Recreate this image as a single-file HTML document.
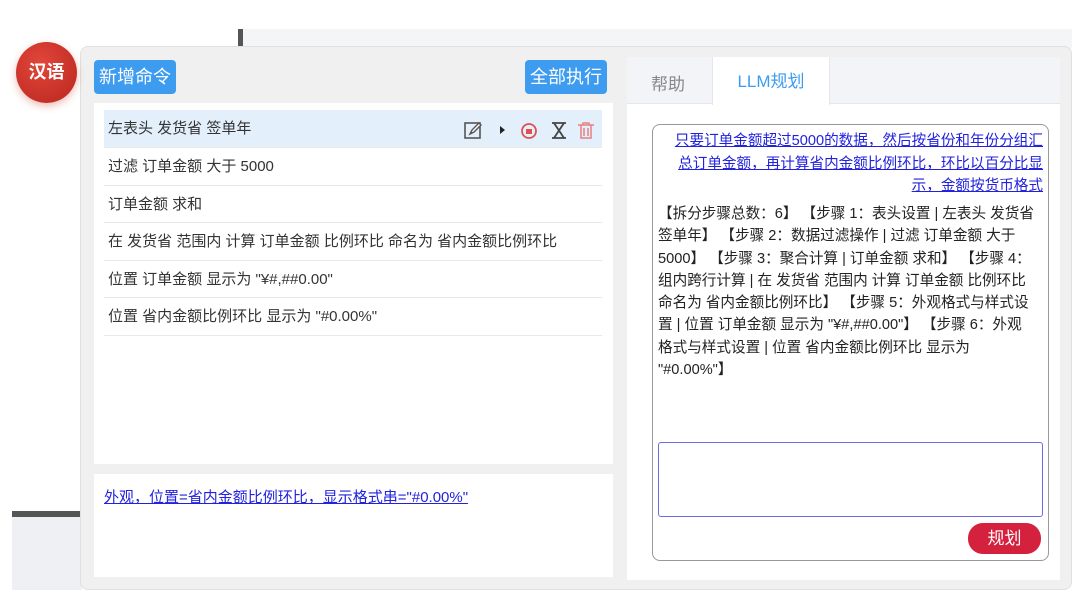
<!DOCTYPE html>
<html><head><meta charset="utf-8"><style>
*{box-sizing:border-box;margin:0;padding:0}
body{width:1080px;height:599px;background:#fff;position:relative;overflow:hidden;font-family:"Liberation Sans","Noto Sans CJK SC",sans-serif;color:#333}
.abs{position:absolute}
.row{position:absolute;left:104px;width:498px;height:37.5px;border-bottom:1px solid #e8e8e8;font-size:15px;line-height:37px;padding-left:4px;background:#fff}
.btn{position:absolute;background:#3d9cf0;color:#fff;font-size:18px;line-height:34px;text-align:center;border-radius:4px;height:34px}
</style></head><body>
<div class="abs" style="left:240px;top:29px;width:832px;height:20px;background:#f4f5f7"></div>
<div class="abs" style="left:238px;top:29px;width:5px;height:17px;background:#555"></div>
<div class="abs" style="left:12px;top:511px;width:70px;height:6px;background:#555"></div>
<div class="abs" style="left:12px;top:517px;width:70px;height:73px;background:#eef0f3"></div>
<div class="abs" style="left:80px;top:46px;width:992px;height:544px;background:#f0f0f0;border:1px solid #e0e0e0;border-radius:8px"></div>
<div class="abs" style="left:16px;top:42px;width:61px;height:61px;border-radius:50%;background:radial-gradient(circle at 40% 35%,#e2463a,#b8261e);box-shadow:0 3px 8px rgba(200,60,40,.35);color:#fff;font-size:18px;font-weight:bold;text-align:center;line-height:61px">汉语</div>
<div class="btn" style="left:94px;top:60px;width:82px">新增命令</div>
<div class="btn" style="left:525px;top:60px;width:82px">全部执行</div>
<div class="abs" style="left:94px;top:103px;width:519px;height:361px;background:#fff"></div>
<div class="row" style="top:110px;background:#e3f0fc">左表头 发货省 签单年</div>
<div class="row" style="top:148px">过滤 订单金额 大于 5000</div>
<div class="row" style="top:185.5px">订单金额 求和</div>
<div class="row" style="top:223px">在 发货省 范围内 计算 订单金额 比例环比 命名为 省内金额比例环比</div>
<div class="row" style="top:260.5px">位置 订单金额 显示为 "¥#,##0.00"</div>
<div class="row" style="top:298px">位置 省内金额比例环比 显示为 "#0.00%"</div>
<svg class="abs" style="left:462px;top:120px" width="140" height="20" viewBox="0 0 140 20">
<rect x="3" y="3" width="15" height="15" fill="none" stroke="#555" stroke-width="1.6"/><path d="M8 14l2-4 7-7 2 2-7 7z" fill="#fff" stroke="#555" stroke-width="1.4"/>
<path d="M38 6l5 4-5 4z" fill="#222"/>
<circle cx="67" cy="11" r="7" fill="none" stroke="#e05050" stroke-width="1.8"/><rect x="64" y="9" width="6" height="5" fill="#e05050"/>
<path d="M90 3h14M90 18h14M92 3l10 15M102 3l-10 15" stroke="#444" stroke-width="1.8" fill="none"/>
<path d="M116 5h16M119 5v13h10V5M122 8v8M126 8v8M121 5V3h6v2" stroke="#e88080" stroke-width="1.5" fill="none"/>
</svg>
<div class="abs" style="left:94px;top:474px;width:519px;height:103px;background:#fff"></div>
<div class="abs" style="left:104px;top:486px;font-size:15px;color:#2222dd;text-decoration:underline">外观，位置=省内金额比例环比，显示格式串="#0.00%"</div>
<div class="abs" style="left:627px;top:57px;width:433px;height:523px;background:#fff"></div>
<div class="abs" style="left:627px;top:57px;width:433px;height:47px;background:#f2f4f7;border-bottom:1px solid #e4e7ed"></div>
<div class="abs" style="left:651px;top:70px;font-size:17px;color:#888">帮助</div>
<div class="abs" style="left:712px;top:57px;width:118px;height:48px;background:#fff;border-left:1px solid #e4e7ed;border-right:1px solid #e4e7ed;color:#3d9cf0;font-size:17px;text-align:center;line-height:50px">LLM规划</div>
<div class="abs" style="left:652px;top:124px;width:397px;height:437px;border:1px solid #999;border-radius:8px"></div>
<div class="abs" style="left:600px;top:130px;width:443px;font-size:14.6px;line-height:22.5px;color:#2222dd;text-decoration:underline;text-align:right;white-space:nowrap">只要订单金额超过5000的数据，然后按省份和年份分组汇<br>总订单金额，再计算省内金额比例环比，环比以百分比显<br>示，金额按货币格式</div>
<div class="abs" style="left:658px;top:203px;font-size:14.6px;line-height:22.3px;color:#222;white-space:nowrap">【拆分步骤总数：6】 【步骤 1：表头设置 | 左表头 发货省<br>签单年】 【步骤 2：数据过滤操作 | 过滤 订单金额 大于<br>5000】 【步骤 3：聚合计算 | 订单金额 求和】 【步骤 4：<br>组内跨行计算 | 在 发货省 范围内 计算 订单金额 比例环比<br>命名为 省内金额比例环比】 【步骤 5：外观格式与样式设<br>置 | 位置 订单金额 显示为 "¥#,##0.00"】 【步骤 6：外观<br>格式与样式设置 | 位置 省内金额比例环比 显示为<br>"#0.00%"】</div>
<div class="abs" style="left:658px;top:442px;width:385px;height:75px;border:1.5px solid #6c6cdc;border-radius:3px"></div>
<div class="abs" style="left:968px;top:523px;width:73px;height:31px;background:#d4213d;border-radius:15px;color:#fff;font-size:17px;text-align:center;line-height:31px">规划</div>
</body></html>
